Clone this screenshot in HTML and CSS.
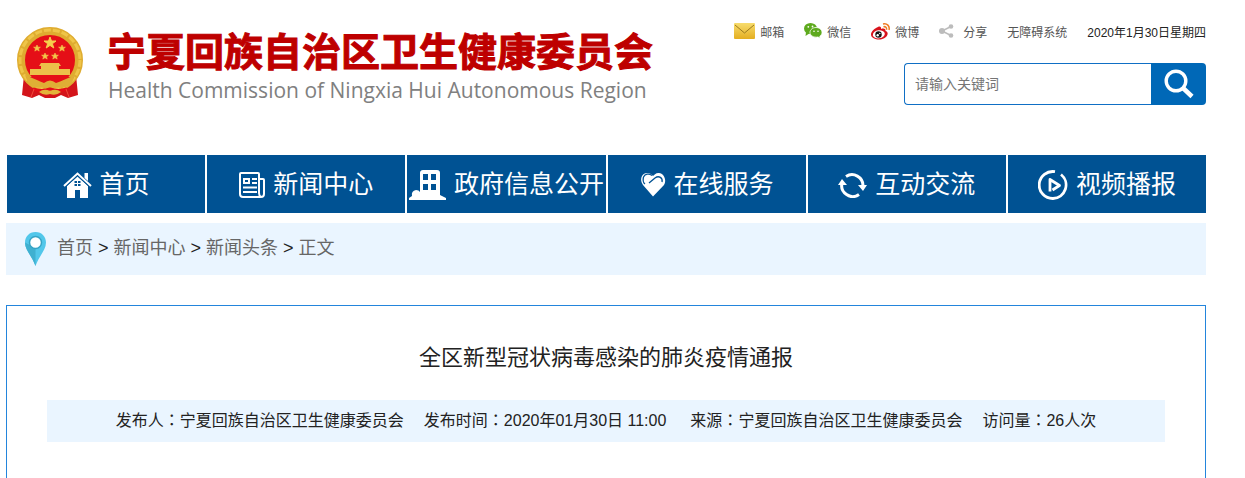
FILE: index.html
```html
<!DOCTYPE html>
<html lang="zh-CN">
<head>
<meta charset="utf-8">
<title>全区新型冠状病毒感染的肺炎疫情通报</title>
<link rel="stylesheet" href="styles.css">
</head>
<body>
<header class="header">
  <a class="brand" href="#">
    <svg class="emblem" viewBox="0 0 68 72" aria-hidden="true">
      <path d="M8 48L6 68l10 3 7-3 6 3h10l6-3 7 3 10-3-2-20z" fill="#d3141a"/>
      <circle cx="34" cy="33" r="29" fill="#e50f17" stroke="#dfac30" stroke-width="8"/>
      <circle cx="34" cy="33" r="30" fill="none" stroke="#efc548" stroke-width="3" stroke-dasharray="7 2"/>
      <path d="M34 10l1.500 4h4.500l-3.600 2.700 1.400 4.300-3.800-2.600-3.800 2.600 1.400-4.300-3.600-2.700h4.500z" fill="#f6d04c" stroke="#f6d04c"/>
      <path id="s" d="M21 18l1 2.200h2.400l-1.900 1.500.7 2.400-2.200-1.400-2.200 1.400.7-2.400-1.900-1.500H20z" fill="#f3c94a" stroke="#f3c94a" stroke-width=".6"/>
      <use href="#s" x="25"/><use href="#s" x="8" y="8"/><use href="#s" x="18" y="8"/>
      <path d="M25 36h18l2 3h-2v3h11v6H14v-6h11v-3h-2z" fill="#ecc04a"/>
      <path d="M10 50h48l-5 7H15z" fill="#e50f17"/>
      <path d="M9 48q12 5 19 8 6-5 12 0 8-3 19-8l-4 10q-9 4-15 2-5 3-12 0-8 2-15-2z" fill="#dfae35"/>
      <path d="M17 62q9 3 17 0 8 3 17 0" fill="none" stroke="#e50f17" stroke-width="3"/>
      <path d="M23 65q5-4 11-1 6-3 11 1-5 4-11 2-6 2-11-2z" fill="#e3b43b"/>
      <path d="M18 62l-3 8M50 62l3 8" stroke="#f04a3a"/>
    </svg>
    <span class="brand-text">
      <span class="brand-cn">宁夏回族自治区卫生健康委员会</span>
      <span class="brand-en">Health Commission of Ningxia Hui Autonomous Region</span>
    </span>
  </a>
  <div class="tools">
    <nav class="links" aria-label="快捷链接">
      <a class="link" href="#"><svg width="21" height="16" viewBox="0 0 21 16" aria-hidden="true"><defs><linearGradient id="mail" x2="0" y2="1"><stop stop-color="#f7dc6d"/><stop offset="1" stop-color="#e4ae20"/></linearGradient></defs><rect width="21" height="16" rx="1" fill="url(#mail)"/><path d="M1 2l9.500 8L20 2" fill="none" stroke="#9c7a1c"/></svg>邮箱</a>
      <a class="link" href="#"><svg width="18" height="16" viewBox="0 0 18 16" aria-hidden="true"><g fill="#5eaa1e"><ellipse cx="6.500" cy="5.500" rx="6.500" ry="5.500"/><path d="M2 9l-.5 4L6 10z"/></g><path d="M12 4.500c3.300 0 6 2.200 6 4.900 0 1.600-.9 2.900-2.200 3.800l.4 2-2.200-1.200c-4.200.8-8-1.400-8-4.600C6 6.700 8.700 4.500 12 4.500z" fill="#5eaa1e" stroke="#fff" stroke-width=".8"/><g fill="#fff"><circle cx="4.300" cy="3.800" r=".9"/><circle cx="8.500" cy="3.500" r=".9"/><circle cx="10" cy="8.200" r=".8"/><circle cx="14" cy="8.200" r=".8"/></g></svg>微信</a>
      <a class="link" href="#"><svg width="19" height="17" viewBox="0 0 19 17" aria-hidden="true"><path d="M7 4C9 3 10.500 4 10 6c3-1 5 0 4.500 2 2 .6 2.500 2 2 3.500C15.500 15 11.500 16.500 8 16.500S0 15 0 11.500C0 8.500 4 5 7 4z" fill="#d8131c"/><ellipse cx="7.800" cy="11.300" rx="6" ry="4" fill="#fff" transform="rotate(-8 8 11)"/><circle cx="7.500" cy="11.500" r="3.200" fill="#111"/><circle cx="6.700" cy="12.300" r="1.200" fill="#fff"/><circle cx="8.800" cy="10.500" r=".7" fill="#fff"/><path d="M12 1c4-1 7 2 6 6M12.500 3.700c2-.4 3.500 1 3 3" fill="none" stroke="#ef7b22" stroke-width="1.500"/></svg>微博</a>
      <a class="link link-share" href="#"><svg width="15" height="14" viewBox="0 0 15 14" aria-hidden="true"><path d="M12 2.500L3 7l9 4.500" fill="none" stroke="#bcbcbc" stroke-width="1.500"/><g fill="#bcbcbc"><circle cx="3" cy="7" r="3"/><circle cx="12" cy="2.500" r="2.300"/><circle cx="12" cy="11.500" r="2.300"/></g></svg>分享</a>
      <a class="link" href="#">无障碍系统</a>
      <span class="date">2020年1月30日星期四</span>
    </nav>
    <form class="search">
      <input class="search-input" type="text" placeholder="请输入关键词" aria-label="请输入关键词">
      <button class="search-button" type="button" aria-label="搜索"><svg width="30" height="30" viewBox="0 0 30 30" fill="none" stroke="#fff" aria-hidden="true"><circle cx="12" cy="12" r="9.800" stroke-width="3.400"/><path d="M19 19l9 8.500" stroke-width="4.500"/></svg></button>
    </form>
  </div>
</header>

<nav class="menu" aria-label="主导航">
  <a class="menu-item" href="#"><svg width="29" height="26" viewBox="0 0 29 26" aria-hidden="true"><path d="M21.500 1h3.500v8l-3.500-3z" fill="#fff"/><path d="M4 14L14.500 4.500 25 14v12h-8v-8h-5v8H4z" fill="#fff"/><path d="M1 14L14.500 1.500 28 14" fill="none" stroke="#fff" stroke-width="2"/><path d="M3.500 14L14.500 4 25.500 14" fill="none" stroke="#005293" stroke-width=".8"/><path d="M11.500 9h2.500v2h-2.500zM15 9h2.500v2H15zM11.500 12h2.500v2h-2.500zM15 12h2.500v2H15z" fill="#005293"/></svg>首页</a>
  <a class="menu-item" href="#"><svg width="26" height="26" viewBox="0 0 26 26" fill="none" stroke="#fff" stroke-width="2" aria-hidden="true"><path d="M20 21V2q0-1-1-1H2Q1 1 1 2v20q0 3 3 3h18q3 0 3-3V8q0-1-1-1h-4v14q0 3 2 4"/><path d="M5 7h5v4H5zM13 7h5M13 11h5M4 15.500h14M4 20h14"/></svg>新闻中心</a>
  <a class="menu-item" href="#"><svg width="37" height="30" viewBox="0 0 37 30" aria-hidden="true"><path d="M11 25V3q0-3 3-3h14q3 0 3 3v22l6 3v2H0v-2l3-2q-1-5 4-6 3 0 4 2z" fill="#fff"/><path d="M14 4h5v6h-5zM22 4h5v6h-5zM14 14h5v6h-5zM22 14h5v6h-5z" fill="#005293"/></svg>政府信息公开</a>
  <a class="menu-item" href="#"><svg width="26" height="26" viewBox="0 0 26 26" aria-hidden="true"><path d="M3 13l10 11.500L24 13c3-5 0-11.500-5-12-3-.3-5 2-6 3C10 0 4 0 2 4c-1.500 3-1 6 1 9z" fill="#fff"/><path d="M12 3.500C9 1 5 2 3.500 5c-1 4 0 6 1.500 7M9 11l6-5c4-3 8 0 7 4" fill="none" stroke="#005293" stroke-width="1.300"/></svg>在线服务</a>
  <a class="menu-item" href="#"><svg width="29" height="26" viewBox="0 0 29 26" aria-hidden="true"><g fill="none" stroke="#fff" stroke-width="3"><path d="M8 4.500A11 11 0 0 1 25 14"/><path d="M21 22.500A11 11 0 0 1 4 11"/></g><path d="M20 13h9l-4 6zM0 13h9L4 7z" fill="#fff"/></svg>互动交流</a>
  <a class="menu-item" href="#"><svg width="30" height="30" viewBox="0 0 30 30" fill="none" stroke="#fff" stroke-width="2.800" aria-hidden="true"><path d="M17 1.700A13.500 13.500 0 1 0 15 28.500A13.500 13.500 0 0 0 23 4.500"/><path d="M12 21.500V9.500l9.500 6-7 4.500" stroke-linejoin="round"/></svg>视频播报</a>
</nav>

<nav class="crumbs" aria-label="当前位置">
  <svg width="21" height="34" viewBox="0 0 21 34" aria-hidden="true"><path d="M10.500 0C4 0 0 5 0 10.500 0 18 7 24 10.500 34 14 24 21 18 21 10.500 21 5 17 0 10.500 0z" fill="#52c7ea"/><path d="M0 10.500C0 18 7 24 10.500 34V16z" fill="#3fb0d0"/><circle cx="10.500" cy="10.500" r="6" fill="#fff" stroke="#36a4c5" stroke-width="1.500"/></svg>
  <p class="crumbs-text"><a href="#">首页</a> &gt; <a href="#">新闻中心</a> &gt; <a href="#">新闻头条</a> &gt; <a href="#">正文</a></p>
</nav>

<main class="article">
  <h1 class="title">全区新型冠状病毒感染的肺炎疫情通报</h1>
  <div class="meta">
    <span>发布人<span class="colon" lang="zh-TW">：</span>宁夏回族自治区卫生健康委员会</span>
    <span class="meta-time">发布时间<span class="colon" lang="zh-TW">：</span>2020年01月30日 11:00</span>
    <span>来源<span class="colon" lang="zh-TW">：</span>宁夏回族自治区卫生健康委员会</span>
    <span>访问量<span class="colon" lang="zh-TW">：</span>26人次</span>
  </div>
</main>
</body>
</html>
```
FILE: styles.css
```css
* {
  box-sizing: border-box;
}

body {
  display: flex;
  flex-direction: column;
  min-height: 100vh;
  margin: 0;
  padding: 0 39px 0 6px;
  background: #fff;
  color: #222;
  font-family: "Liberation Sans", "Noto Sans CJK SC", sans-serif;
  font-size: 16px;
}

a {
  color: inherit;
  text-decoration: none;
}

svg {
  flex: none;
}

.header {
  display: flex;
  justify-content: space-between;
  align-items: flex-start;
  padding: 21px 0 50px;
}

.brand {
  display: flex;
  gap: 23px;
  padding: 6px 0 0 10px;
}

.emblem {
  width: 68px;
  height: 72px;
}

.brand-text {
  display: flex;
  flex-direction: column;
  white-space: nowrap;
}

.brand-cn {
  color: #be0000;
  font-size: 39px;
  font-weight: 700;
  line-height: 52px;
  -webkit-text-stroke: 1px #be0000;
}

.brand-en {
  padding-left: 1px;
  color: #808080;
  font-family: "Open Sans", "Noto Sans", sans-serif;
  font-size: 21px;
  line-height: 22px;
}

.tools {
  display: flex;
  flex-direction: column;
  align-items: flex-end;
  gap: 22px;
}

.links {
  display: flex;
  align-items: center;
  gap: 20px;
  height: 20px;
  color: #555;
  font-size: 12px;
  white-space: nowrap;
}

.link {
  display: flex;
  align-items: center;
  gap: 5px;
}

.link-share {
  gap: 9px;
}

.date {
  color: #222;
}

.search {
  display: flex;
  width: 302px;
  height: 42px;
}

.search-input {
  flex: 1;
  min-width: 0;
  padding: 0 10px;
  border: 1px solid #0f6fc5;
  border-right: 0;
  border-radius: 4px 0 0 4px;
  font: 14px "Liberation Sans", "Noto Sans CJK SC", sans-serif;
}

.search-input::placeholder {
  color: #757575;
}

.search-button {
  display: flex;
  align-items: center;
  justify-content: center;
  width: 55px;
  padding: 0;
  border: 0;
  border-radius: 0 4px 4px 0;
  background: #0068b7;
}

.menu {
  display: grid;
  grid-template-columns: repeat(6, 1fr);
  gap: 2px;
  padding-left: 1px;
}

.menu-item {
  display: flex;
  align-items: center;
  justify-content: center;
  gap: 8px;
  min-width: 0;
  height: 58px;
  padding-bottom: 4px;
  background: #005293;
  color: #fff;
  font-size: 25px;
  white-space: nowrap;
}

.menu-item svg {
  margin-top: 6px;
}

.crumbs {
  display: flex;
  align-items: center;
  gap: 11px;
  height: 52px;
  margin: 10px 0 30px;
  padding-left: 19px;
  background: #eaf5ff;
  font-size: 18px;
}

.crumbs-text {
  margin: 0;
  padding-bottom: 6px;
}

.crumbs-text a {
  color: #666;
}

.article {
  flex: 1;
  padding: 34px 40px 0;
  border: 1px solid #2385dc;
  border-bottom: 0;
}

.title {
  margin: 0 0 24px;
  font-size: 22px;
  font-weight: 400;
  line-height: 36px;
  text-align: center;
}

.meta {
  display: flex;
  justify-content: center;
  gap: 20px;
  background: #eaf5ff;
  line-height: 42px;
  white-space: nowrap;
}

.meta-time {
  padding-right: 4px;
}

.colon {
  font-family: "Noto Sans CJK TC", sans-serif;
  line-height: 1;
}
```
